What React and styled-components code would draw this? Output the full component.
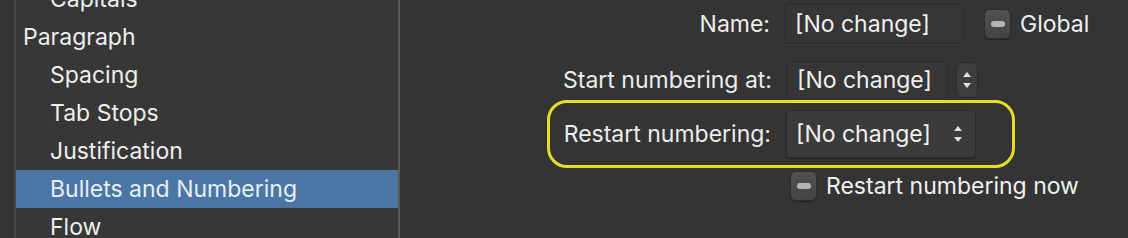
import styled, { createGlobalStyle } from "styled-components";

const Global = createGlobalStyle`
  html, body {
    margin: 0;
    padding: 0;
    background: #343434;
  }
  body {
    font-family: Inter, "Liberation Sans", sans-serif;
    -webkit-font-smoothing: antialiased;
  }
`;

const Window = styled.div`
  display: flex;
  width: 1128px;
  height: 238px;
  overflow: hidden;
  background: #343434;
  font-size: 23px;
  color: #eeeeee;
`;

const Gutter = styled.div`
  width: 14px;
  flex: none;
  background: #343434;
  border-right: 2px solid #484848;
`;

const Sidebar = styled.div`
  width: 382px;
  flex: none;
  background: #373737;
  border-right: 2px solid #585858;
  overflow: hidden;
`;

const List = styled.div`
  margin-top: -20px;
  display: flex;
  flex-direction: column;
`;

const Item = styled.div`
  height: 38px;
  display: flex;
  align-items: center;
  padding-left: ${(p) => (p.$sub ? 34 : 7)}px;
  background: ${(p) => (p.$active ? "#4b76a3" : "transparent")};
  color: ${(p) => (p.$active ? "#e6eef8" : "#eeeeee")};
  white-space: nowrap;
`;

const Panel = styled.div`
  flex: 1;
  display: flex;
  flex-direction: column;
  padding-top: 3px;
`;

const Row = styled.div`
  display: flex;
  align-items: center;
  height: ${(p) => p.$h}px;
  margin-top: ${(p) => p.$top || 0}px;
`;

const Label = styled.div`
  width: ${(p) => p.$w}px;
  flex: none;
  text-align: right;
  padding-right: 15px;
  box-sizing: border-box;
  color: #ececec;
  white-space: nowrap;
`;

const Field = styled.div`
  box-sizing: border-box;
  width: ${(p) => p.$w}px;
  height: ${(p) => p.$h}px;
  display: flex;
  align-items: center;
  padding-left: 9px;
  background: #363636;
  border: 1.5px solid #2a2a2a;
  border-radius: ${(p) => p.$r || 2}px;
  box-shadow: 0 1px 0 #3d3d3d;
  color: #f0f0f0;
  white-space: nowrap;
`;

const Popup = styled(Field)`
  background: #3b3b3b;
  border-color: #2c2c2c;
  justify-content: space-between;
  padding-right: 12px;
  box-shadow: 0 1px 1px #262626;
`;

const Stepper = styled.div`
  width: 20px;
  height: 34px;
  margin-left: 8px;
  border-radius: 7px;
  background: #3e3e3e;
  border: 1px solid #2b2b2b;
  display: flex;
  align-items: center;
  justify-content: center;
`;

const Ring = styled.div`
  margin-left: 147px;
  width: 468px;
  height: 68px;
  box-sizing: border-box;
  border: 3px solid #e3df24;
  border-radius: 20px;
  display: flex;
  align-items: center;
`;

const Check = styled.div`
  width: 27px;
  height: 30px;
  flex: none;
  box-sizing: border-box;
  border-radius: 6px;
  background: linear-gradient(#525252, #444);
  border: 1px solid #2c2c2c;
  box-shadow: 0 1px 1px #222;
  display: flex;
  align-items: center;
  justify-content: center;
  margin-left: ${(p) => p.$left}px;
  margin-right: 9px;
  &::after {
    content: "";
    width: 14px;
    height: 6px;
    border-radius: 3px;
    background: #b5b5b5;
  }
`;

const CheckText = styled.span`
  color: #f0f0f0;
  white-space: nowrap;
`;

const Arrows = () => (
  <svg width="10" height="22" viewBox="0 0 10 22">
    <path d="M5 3 L9 8 L1 8 Z" fill="#e0e0e0" />
    <path d="M5 19 L9 14 L1 14 Z" fill="#e0e0e0" />
  </svg>
);

const items = [
  { t: "Capitals", sub: true },
  { t: "Paragraph" },
  { t: "Spacing", sub: true },
  { t: "Tab Stops", sub: true },
  { t: "Justification", sub: true },
  { t: "Bullets and Numbering", sub: true, active: true },
  { t: "Flow", sub: true },
];

export default function App() {
  return (
    <Window>
      <Global />
      <Gutter />
      <Sidebar>
        <List>
          {items.map((it) => (
            <Item key={it.t} $sub={it.sub} $active={it.active}>
              {it.t}
            </Item>
          ))}
        </List>
      </Sidebar>
      <Panel>
        <Row $h={42}>
          <Label $w={385}>Name:</Label>
          <Field $w={179} $h={40}>[No change]</Field>
          <Check $left={20} />
          <CheckText>Global</CheckText>
        </Row>
        <Row $h={38} $top={16}>
          <Label $w={387}>Start numbering at:</Label>
          <Field $w={161} $h={38} $r={5}>[No change]</Field>
          <Stepper>
            <Arrows />
          </Stepper>
        </Row>
        <Row $h={68} $top={1}>
          <Ring>
            <Label $w={236}>Restart numbering:</Label>
            <Popup $w={190} $h={48} $r={4}>
              [No change]
              <Arrows />
            </Popup>
          </Ring>
        </Row>
        <Row $h={36}>
          <Check $left={390} />
          <CheckText>Restart numbering now</CheckText>
        </Row>
      </Panel>
    </Window>
  );
}
